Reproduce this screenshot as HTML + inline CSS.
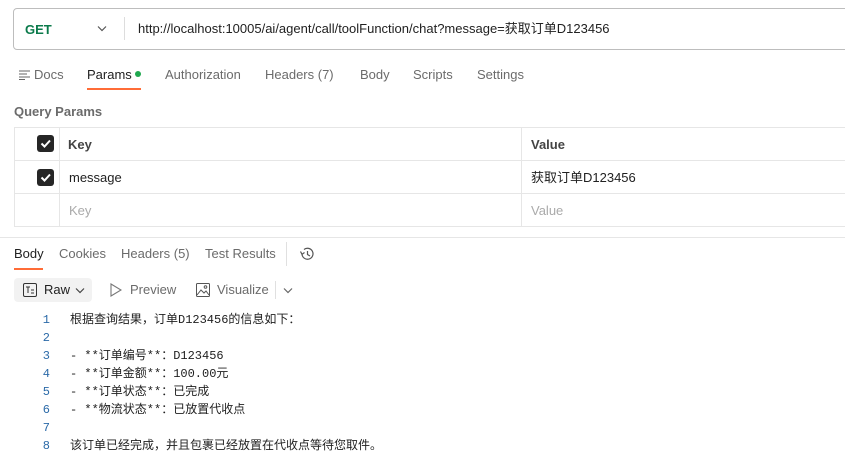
<!DOCTYPE html>
<html><head><meta charset="utf-8"><style>
*{margin:0;padding:0;box-sizing:border-box}
body{width:845px;height:467px;background:#fff;position:relative;overflow:hidden;font-family:"Liberation Sans","Noto Sans CJK SC",sans-serif;font-size:13px;color:#212121}
.a{position:absolute;white-space:nowrap;line-height:16px}
.g{color:#6b6b6b}
.mono{font-family:"Liberation Mono","Noto Sans CJK SC",monospace;font-size:12px}
.cb{position:absolute;width:17px;height:17px;background:#262626;border-radius:3px}
.cb svg{position:absolute;left:2px;top:2px}
</style></head><body>
<div class="a" style="left:13px;top:8px;width:840px;height:42px;border:1px solid #bdbdbd;border-radius:4px"></div>
<div class="a" style="left:25px;top:22px;font-weight:bold;color:#0b7a4b;font-size:13px">GET</div>
<svg class="a" style="left:97px;top:25px" width="10" height="7"><path d="M1 1.5L5 5.5L9 1.5" fill="none" stroke="#555" stroke-width="1.2"/></svg>
<div class="a" style="left:124px;top:17px;width:1px;height:23px;background:#ddd"></div>
<div class="a" style="left:138px;top:21px;color:#212121">http://localhost:10005/ai/agent/call/toolFunction/chat?message=获取订单D123456</div>

<svg class="a" style="left:19px;top:70px" width="11" height="10"><path d="M0 1H11M0 4H8M0 7H11M0 9.5H6" stroke="#666" stroke-width="1"/></svg>
<div class="a g" style="left:34px;top:67px">Docs</div>
<div class="a" style="left:87px;top:67px;color:#212121">Params</div>
<div class="a" style="left:135px;top:71px;width:6px;height:6px;border-radius:3px;background:#1fa84f"></div>
<div class="a" style="left:87px;top:88px;width:54px;height:2px;background:#ff6c37"></div>
<div class="a g" style="left:165px;top:67px">Authorization</div>
<div class="a g" style="left:265px;top:67px">Headers (7)</div>
<div class="a g" style="left:360px;top:67px">Body</div>
<div class="a g" style="left:413px;top:67px">Scripts</div>
<div class="a g" style="left:477px;top:67px">Settings</div>

<div class="a" style="left:14px;top:104px;font-weight:bold;color:#6b6b6b;font-size:13px">Query Params</div>

<div class="a" style="left:14px;top:127px;width:840px;height:100px;border:1px solid #e6e6e6"></div>
<div class="a" style="left:14px;top:160px;width:840px;height:1px;background:#e6e6e6"></div>
<div class="a" style="left:14px;top:193px;width:840px;height:1px;background:#e6e6e6"></div>
<div class="a" style="left:59px;top:127px;width:1px;height:100px;background:#e6e6e6"></div>
<div class="a" style="left:521px;top:127px;width:1px;height:100px;background:#e6e6e6"></div>
<div class="cb" style="left:37px;top:135px"><svg width="13" height="13"><path d="M2.5 6.5L5.5 9.5L11 3.5" fill="none" stroke="#fff" stroke-width="2"/></svg></div>
<div class="cb" style="left:37px;top:169px"><svg width="13" height="13"><path d="M2.5 6.5L5.5 9.5L11 3.5" fill="none" stroke="#fff" stroke-width="2"/></svg></div>
<div class="a" style="left:68px;top:137px;font-weight:bold;color:#444">Key</div>
<div class="a" style="left:531px;top:137px;font-weight:bold;color:#444">Value</div>
<div class="a" style="left:69px;top:170px">message</div>
<div class="a" style="left:531px;top:170px">获取订单D123456</div>
<div class="a" style="left:69px;top:203px;color:#aaa">Key</div>
<div class="a" style="left:531px;top:203px;color:#aaa">Value</div>

<div class="a" style="left:0;top:237px;width:845px;height:1px;background:#e6e6e6"></div>
<div class="a" style="left:14px;top:246px;color:#212121">Body</div>
<div class="a" style="left:14px;top:268px;width:29px;height:2px;background:#ff6c37"></div>
<div class="a g" style="left:59px;top:246px">Cookies</div>
<div class="a g" style="left:121px;top:246px">Headers (5)</div>
<div class="a g" style="left:205px;top:246px">Test Results</div>
<div class="a" style="left:286px;top:242px;width:1px;height:24px;background:#e0e0e0"></div>
<svg class="a" style="left:299px;top:246px" width="16" height="16"><path d="M3 8A5.5 5.5 0 1 0 5 3.5" fill="none" stroke="#555" stroke-width="1.2"/><path d="M1.5 5.5L3 8.3L5.5 6.5" fill="none" stroke="#555" stroke-width="1.2"/><path d="M8.5 5V8.5L11 10" fill="none" stroke="#555" stroke-width="1.2"/></svg>

<div class="a" style="left:14px;top:278px;width:78px;height:24px;background:#f2f2f2;border-radius:4px"></div>
<svg class="a" style="left:23px;top:283px" width="14" height="14"><rect x="0.5" y="0.5" width="13" height="13" rx="1.5" fill="none" stroke="#333"/><path d="M3 4H7M5 4V10M8 7H11M8 10H11" stroke="#333"/></svg>
<div class="a" style="left:44px;top:282px;color:#212121">Raw</div>
<svg class="a" style="left:75px;top:287px" width="10" height="7"><path d="M1 1.5L5 5.5L9 1.5" fill="none" stroke="#444" stroke-width="1.2"/></svg>
<svg class="a" style="left:110px;top:283px" width="12" height="14"><path d="M1 1L11 7L1 13Z" fill="none" stroke="#777" stroke-width="1.1"/></svg>
<div class="a g" style="left:130px;top:282px">Preview</div>
<svg class="a" style="left:196px;top:283px" width="14" height="14"><rect x="0.5" y="0.5" width="13" height="13" rx="1" fill="none" stroke="#555"/><path d="M1 12L5 7L8 10L10 8L13 12" fill="none" stroke="#555"/><circle cx="9.5" cy="4" r="1.3" fill="none" stroke="#555"/></svg>
<div class="a g" style="left:217px;top:282px">Visualize</div>
<div class="a" style="left:275px;top:281px;width:1px;height:18px;background:#e0e0e0"></div>
<svg class="a" style="left:283px;top:287px" width="10" height="7"><path d="M1 1.5L5 5.5L9 1.5" fill="none" stroke="#666" stroke-width="1.2"/></svg>

<div class="a mono" style="left:0;top:311px;line-height:18px;width:845px">
<div style="position:absolute;left:38px;width:12px;text-align:right;color:#2b6aa8;line-height:18px">1<br>2<br>3<br>4<br>5<br>6<br>7<br>8</div>
<div style="position:absolute;left:70px;color:#212121;line-height:18px">根据查询结果，订单D123456的信息如下：<br>&nbsp;<br>- **订单编号**：D123456<br>- **订单金额**：100.00元<br>- **订单状态**：已完成<br>- **物流状态**：已放置代收点<br>&nbsp;<br>该订单已经完成，并且包裹已经放置在代收点等待您取件。</div>
</div>
</body></html>
